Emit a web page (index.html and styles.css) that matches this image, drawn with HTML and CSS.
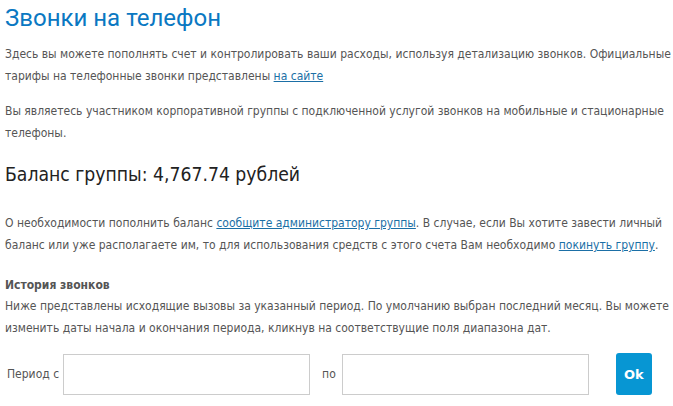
FILE: index.html
```html
<!DOCTYPE html>
<html lang="ru">
<head>
    <meta charset="UTF-8">
    <title>Звонки на телефон</title>
    <link rel="stylesheet" href="styles.css">
</head>
<body>
    <div class="page">
        <h1>Звонки на телефон</h1>

        <p>Здесь вы можете пополнять счет и контролировать ваши расходы, используя детализацию звонков. Официальные тарифы на телефонные звонки представлены <a href="#">на сайте</a></p>

        <p>Вы являетесь участником корпоративной группы с подключенной услугой звонков на мобильные и стационарные телефоны.</p>

        <h2 class="balance">Баланс группы: 4,767.74 рублей</h2>

        <p>О необходимости пополнить баланс <a href="#">сообщите администратору группы</a>. В случае, если Вы хотите завести личный баланс или уже располагаете им, то для использования средств с этого счета Вам необходимо <a href="#">покинуть группу</a>.</p>

        <div class="history">
            <h3>История звонков</h3>
            <p>Ниже представлены исходящие вызовы за указанный период. По умолчанию выбран последний месяц. Вы можете изменить даты начала и окончания периода, кликнув на соответствущие поля диапазона дат.</p>
        </div>

        <form class="period" onsubmit="return false">
            <label for="dateFrom">Период с</label>
            <input type="text" id="dateFrom">
            <label for="dateTo" class="to">по</label>
            <input type="text" id="dateTo">
            <button type="submit">Ok</button>
        </form>
    </div>
</body>
</html>
```

FILE: styles.css
```css
body {
    margin: 0;
    background: #fff;
    font-family: 'DejaVu Sans Condensed', 'DejaVu Sans', sans-serif;
    font-size: 12px;
    color: #555;
}

.page {
    padding: 0 2px 0 5px;
}

h1 {
    font-family: Roboto, sans-serif;
    font-weight: 400;
    font-size: 24px;
    line-height: 32px;
    color: #0a78c2;
    margin: 2px 0 9px;
}

p {
    margin: 0 0 13px;
    line-height: 22px;
}

a {
    color: #1b6fa6;
}

.balance {
    font-family: 'DejaVu Sans Condensed', 'DejaVu Sans', sans-serif;
    font-weight: 400;
    font-size: 19.2px;
    color: #222;
    margin: 18px 0 24px;
    line-height: 26px;
}

.history {
    margin-top: 19px;
}

.history h3 {
    font-size: 12px;
    font-weight: 700;
    color: #555;
    margin: 0;
    line-height: 20px;
}

.period {
    display: flex;
    align-items: center;
    margin-top: 14px;
}

.period label {
    padding-left: 2px;
    margin-right: 4px;
}

.period .to {
    margin: 0 6px 0 10px;
}

.period input {
    width: 247px;
    height: 41px;
    box-sizing: border-box;
    border: 1px solid #ccc;
    padding: 0 8px;
    font-size: 13px;
}

.period button {
    margin-left: 27px;
    width: 36px;
    height: 42px;
    border: none;
    border-radius: 3px;
    background: #0796d3;
    color: #fff;
    font-family: 'DejaVu Sans', sans-serif;
    font-weight: 700;
    font-size: 13px;
    padding: 0;
    cursor: pointer;
}
```
